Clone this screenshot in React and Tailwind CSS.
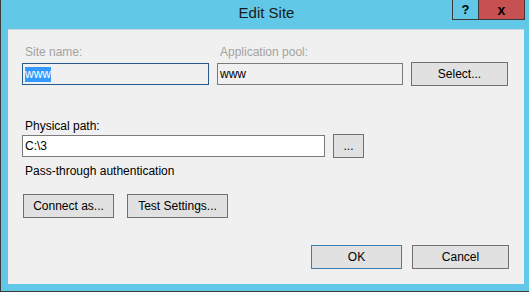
export default function App() {
  const btn =
    "flex h-[24px] items-center justify-center border bg-[#e1e1e1] text-[12px] text-black"

  return (
    <div
      className="flex h-[292px] w-[529px] flex-col border-b border-l border-[#3a3a3a] bg-[#62c8e8]"
      style={{ fontFamily: '"Liberation Sans", Arial, sans-serif' }}
    >
      {/* title bar */}
      <div className="relative h-[29px] shrink-0">
        <div className="flex justify-center pl-[3px] pt-[4px] text-[15px] leading-[18px] text-[#1a1a1a]">
          Edit Site
        </div>
        <div className="absolute right-[4px] top-0 flex h-[20px] border-x border-b border-[#3a3a3a]">
          <div className="flex w-[26px] items-center justify-center border-r border-[#3a3a3a] text-[13px] font-bold leading-none text-black">
            ?
          </div>
          <div className="flex w-[45px] items-center justify-center bg-[#c75050] text-[14px] font-bold leading-none text-black">
            x
          </div>
        </div>
      </div>

      {/* client area */}
      <div className="mb-[7px] ml-[7px] mr-[5px] flex flex-1 flex-col border-t border-[#c9d6dc] bg-[#f0f0f0] pl-[14px] pr-[15px] pt-[14px] text-[12px] leading-[16px] text-black">
        <div className="flex">
          <div className="w-[195px] pl-[3px] text-[#a3a3a3]">Site name:</div>
          <div className="w-[194px] pl-[3px] text-[#a3a3a3]">Application pool:</div>
        </div>
        <div className="mt-[2px] flex h-[24px] items-center">
          <div className="flex h-[22px] w-[187px] items-center border border-[#255a8a] bg-[#f0f0f0] pl-[2px]">
            <span className="bg-[#3399ff] leading-[15px] text-white">www</span>
          </div>
          <div className="ml-[8px] flex h-[22px] w-[186px] items-center border border-[#7a7a7a] bg-[#f0f0f0] pl-[2px]">
            www
          </div>
          <div className={btn + " ml-[8px] w-[97px] border-[#707070]"}>Select...</div>
        </div>

        <div className="mt-[32px] pl-[3px]">Physical path:</div>
        <div className="flex h-[24px] items-center">
          <div className="flex h-[22px] w-[303px] items-center border border-[#7a7a7a] bg-white pl-[2px]">
            C:\3
          </div>
          <div className={btn + " ml-[8px] w-[31px] border-[#707070]"}>...</div>
        </div>

        <div className="mt-[5px] pl-[3px]">Pass-through authentication</div>

        <div className="mt-[15px] flex gap-[13px] pl-[1px]">
          <div className={btn + " w-[91px] border-[#707070]"}>Connect as...</div>
          <div className={btn + " w-[101px] border-[#707070]"}>Test Settings...</div>
        </div>

        <div className="mt-[27px] flex justify-end gap-[10px]">
          <div className={btn + " w-[91px] border-[#3c7fb1]"}>OK</div>
          <div className={btn + " w-[97px] border-[#707070]"}>Cancel</div>
        </div>
      </div>
    </div>
  )
}
